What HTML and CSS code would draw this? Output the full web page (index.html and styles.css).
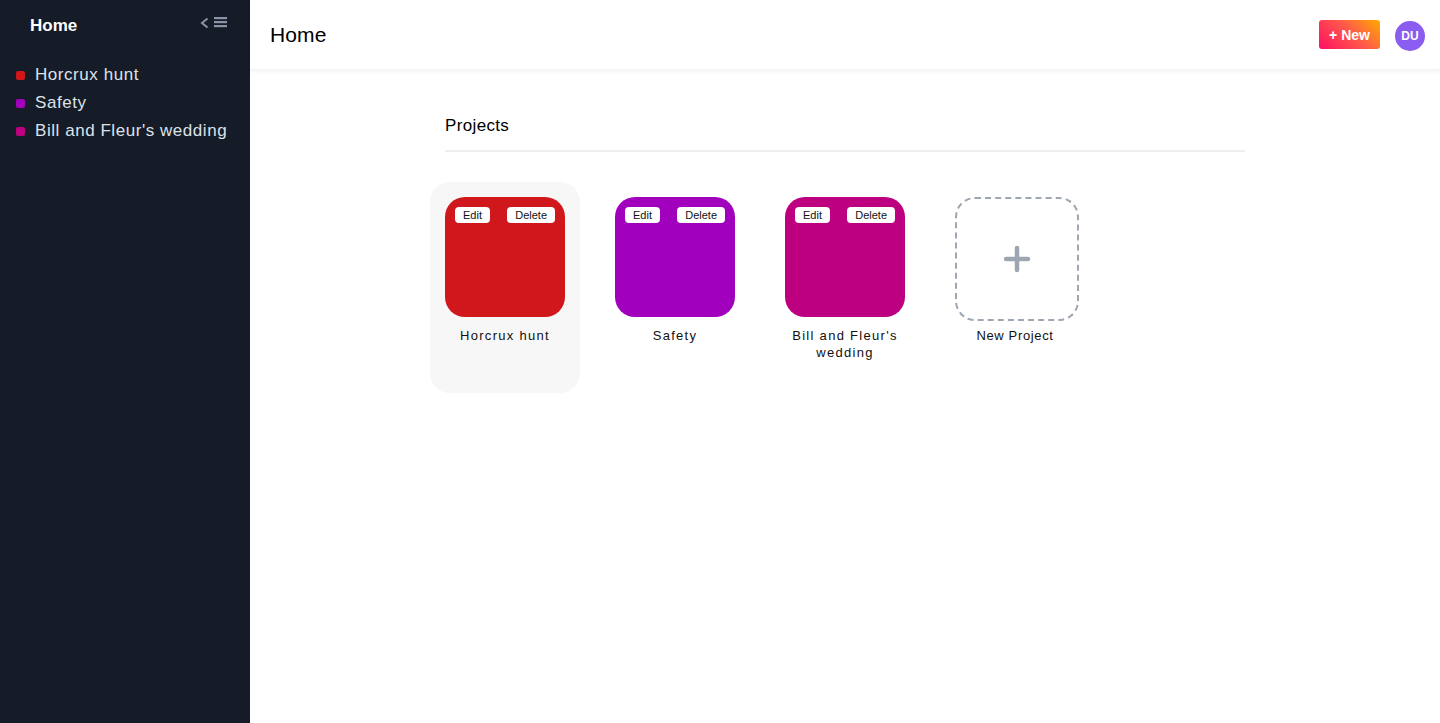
FILE: index.html
```html
<!DOCTYPE html>
<html lang="en">
<head>
<meta charset="utf-8">
<title>Home</title>
<link rel="stylesheet" href="styles.css">
</head>
<body>
<div class="app">
  <aside class="sidebar">
    <div class="side-head">
      <span class="side-title">Home</span>
      <span class="toggle">
        <svg width="28" height="14" viewBox="0 0 28 14">
          <path d="M7.5 2.5 L2 7 L7.5 11.5" fill="none" stroke="#8a94a6" stroke-width="2"/>
          <rect x="14" y="1" width="13" height="2.2" fill="#8a94a6"/>
          <rect x="14" y="5" width="13" height="2.2" fill="#8a94a6"/>
          <rect x="14" y="9" width="13" height="2.2" fill="#8a94a6"/>
        </svg>
      </span>
    </div>
    <ul class="side-list">
      <li class="side-item"><span class="dot dot-red"></span>Horcrux hunt</li>
      <li class="side-item"><span class="dot dot-purple"></span>Safety</li>
      <li class="side-item"><span class="dot dot-magenta"></span>Bill and Fleur's wedding</li>
    </ul>
  </aside>
  <main class="main">
    <header class="topbar">
      <h1 class="page-title">Home</h1>
      <div class="top-actions">
        <button class="new-btn">+ New</button>
        <span class="avatar">DU</span>
      </div>
    </header>
    <section class="content">
      <h2 class="section-title">Projects</h2>
      <div class="grid">
        <div class="card card-active">
          <div class="tile tile-red">
            <span class="chip">Edit</span><span class="chip">Delete</span>
          </div>
          <div class="label">Horcrux hunt</div>
        </div>
        <div class="card">
          <div class="tile tile-purple">
            <span class="chip">Edit</span><span class="chip">Delete</span>
          </div>
          <div class="label">Safety</div>
        </div>
        <div class="card">
          <div class="tile tile-magenta">
            <span class="chip">Edit</span><span class="chip">Delete</span>
          </div>
          <div class="label">Bill and Fleur's wedding</div>
        </div>
        <div class="card">
          <div class="tile tile-new">
            <svg width="28" height="28" viewBox="0 0 28 28">
              <path d="M14 3 V25 M3 14 H25" stroke="#9ea6b1" stroke-width="4.5" stroke-linecap="round"/>
            </svg>
          </div>
          <div class="label label-new">New Project</div>
        </div>
      </div>
    </section>
  </main>
</div>
</body>
</html>
```
FILE: styles.css
```css
* { box-sizing: border-box; }
html, body { margin: 0; padding: 0; height: 100%; }
body {
  font-family: "Liberation Sans", Arial, sans-serif;
  background: #fff;
  color: #111;
  overflow: hidden;
}
.app { display: flex; height: 723px; }
.sidebar {
  width: 250px;
  flex: 0 0 250px;
  background: #151b27;
  color: #fff;
}
.side-head {
  display: flex;
  align-items: center;
  justify-content: space-between;
  height: 51px;
  padding: 0 22px 0 30px;
}
.side-title { font-size: 17px; font-weight: bold; }
.toggle { display: flex; margin-top: -6px; }
.side-list { list-style: none; margin: 0; padding: 10px 0 0 16px; }
.side-item {
  display: flex;
  align-items: center;
  height: 28px;
  font-size: 17px;
  color: #dde2ea;
  letter-spacing: 0.55px;
}
.dot {
  width: 9px; height: 9px; border-radius: 2px;
  margin-right: 10px;
}
.dot-red { background: #d0171c; }
.dot-purple { background: #a100bd; }
.dot-magenta { background: #bd0080; }

.main { flex: 1; display: flex; flex-direction: column; }
.topbar {
  height: 70px;
  display: flex;
  align-items: center;
  justify-content: space-between;
  padding: 0 15px 0 20px;
  box-shadow: 0 1px 4px rgba(0,0,0,0.06);
  border-bottom: 1px solid #f2f3f4;
}
.page-title { margin: 0; font-size: 21px; font-weight: normal; color: #000; letter-spacing: 0.1px; }
.top-actions { display: flex; align-items: center; gap: 15px; }
.new-btn {
  border: 0;
  width: 61px; height: 29px;
  border-radius: 3px;
  background: linear-gradient(45deg, #ff0f62 0%, #ff5a4a 55%, #ffab00 100%);
  color: #fff;
  font-family: inherit;
  font-size: 14px;
  font-weight: bold;
  padding: 0;
}
.avatar {
  width: 30px; height: 30px; border-radius: 50%;
  background: #8a5cf0;
  color: #fff;
  font-size: 12px; font-weight: bold;
  display: flex; align-items: center; justify-content: center;
  margin-top: 2px;
}
.content { width: 800px; margin: 0 auto; padding-top: 46px; }
.section-title {
  margin: 0;
  font-size: 17px;
  font-weight: normal;
  line-height: 20px;
  padding-bottom: 14px;
  border-bottom: 2px solid #eceeef;
  color: #000;
  letter-spacing: 0.35px;
}
.grid { display: flex; gap: 20px; margin: 30px 0 0 -15px; }
.card {
  width: 150px;
  min-height: 211px;
  padding: 15px;
  border-radius: 20px;
  display: flex; flex-direction: column; align-items: center;
}
.card-active { background: #f7f7f7; }
.tile {
  width: 120px; height: 120px;
  border-radius: 20px;
  padding: 10px;
  display: flex; justify-content: space-between; align-items: flex-start;
  flex: 0 0 auto;
}
.tile-red { background: #d0171c; }
.tile-purple { background: #a100bd; }
.tile-magenta { background: #bd0080; }
.tile-new {
  width: 124px; height: 124px;
  border: 2px dashed #9ea6b1;
  align-items: center; justify-content: center;
  align-self: flex-start;
  padding: 0;
}
.chip {
  background: #fff;
  border-radius: 4px;
  height: 16px;
  padding: 0 8px;
  font-size: 11px;
  line-height: 16px;
  color: #111;
}
.label {
  margin-top: 10px;
  font-size: 13px;
  line-height: 17px;
  text-align: center;
  letter-spacing: 1.3px;
  color: #111;
}
.label-new { letter-spacing: 0.65px; margin-top: 6px; }
```
